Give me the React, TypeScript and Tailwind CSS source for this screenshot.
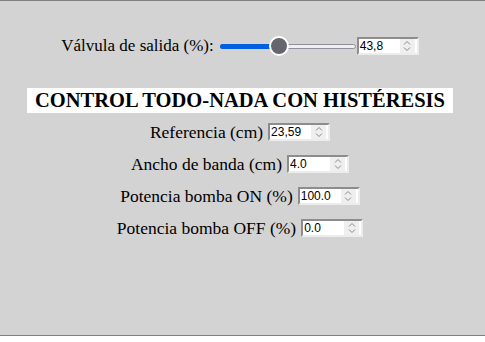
import React from 'react';

const serif = { fontFamily: '"Liberation Serif", "Times New Roman", serif' };

function Spin({ value, w = 'w-[62px]' }: { value: string; w?: string }) {
  return (
    <div className={`${w} h-[18px] flex items-stretch bg-white border-2 border-t-[#8d8d8d] border-l-[#8d8d8d] border-r-[#ececec] border-b-[#ececec]`}>
      <span className="flex-1 pl-[1px] text-[12px] leading-[14px] text-black" style={{ fontFamily: '"Liberation Sans", Arial, sans-serif' }}>{value}</span>
      <span className="w-[15px] bg-[#efefef] flex flex-col items-center justify-center mr-[2px]">
        <svg width="8" height="12" viewBox="0 0 8 12" fill="none" stroke="#8a8a8a" strokeWidth="1">
          <path d="M1 4.5 L4 1.5 L7 4.5" />
          <path d="M1 7.5 L4 10.5 L7 7.5" />
        </svg>
      </span>
    </div>
  );
}

function Row({ label, value }: { label: string; value: string }) {
  return (
    <div className="flex items-center justify-center gap-[5px] h-[32px]">
      <span className="text-[17.5px] text-black" style={serif}>{label}</span>
      <Spin value={value} />
    </div>
  );
}

export default function App() {
  const pct = 43.8;
  return (
    <div className="h-[336px] bg-[#d3d3d3] border-y border-[#808080] flex flex-col items-center pr-[5px]" style={serif}>
      <div className="flex items-center mt-[35px] h-[20px]">
        <span className="text-[17px] text-black mr-[6px]">Válvula de salida (%):</span>
        <div className="relative w-[136px] h-[20px] mr-[1px]">
          <div className="absolute left-0 right-0 top-[8px] h-[5px] rounded-full bg-[#efefef] border border-[#8f8f9d]" />
          <div className="absolute left-0 top-[8px] h-[5px] rounded-full bg-[#0060df]" style={{ width: `${pct}%` }} />
          <div
            className="absolute top-0 w-[20px] h-[20px] rounded-full bg-[#656570] border-2 border-white"
            style={{ left: `calc(${pct}% - 10px)` }}
          />
        </div>
        <Spin value="43,8" />
      </div>

      <h1 className="mt-[32px] bg-white px-[8px] h-[25px] leading-[25px] text-[20.5px] font-bold text-black">
        CONTROL TODO-NADA CON HISTÉRESIS
      </h1>

      <div className="mt-[3px] flex flex-col items-center">
        <Row label="Referencia (cm)" value="23,59" />
        <Row label="Ancho de banda (cm)" value="4.0" />
        <Row label="Potencia bomba ON (%)" value="100.0" />
        <Row label="Potencia bomba OFF (%)" value="0.0" />
      </div>
    </div>
  );
}
